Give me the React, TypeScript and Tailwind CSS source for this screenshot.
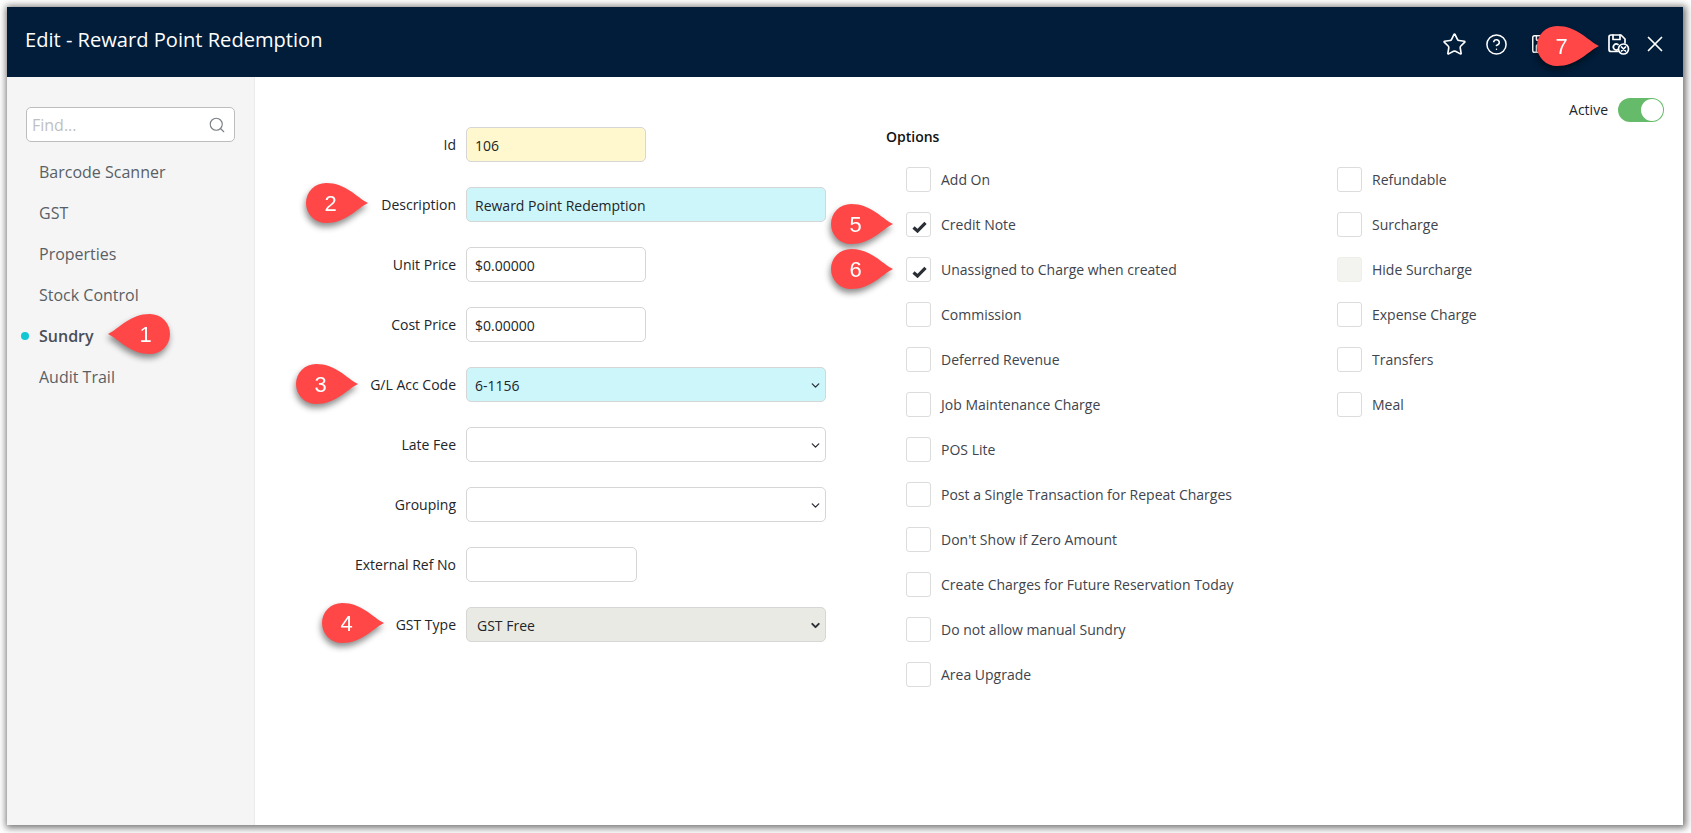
import React from 'react';
import { Star, CircleHelp, Save, X, Search, ChevronDown } from 'lucide-react';

const leftOptions = [
    { label: 'Add On' },
    { label: 'Credit Note', checked: true },
    { label: 'Unassigned to Charge when created', checked: true },
    { label: 'Commission' },
    { label: 'Deferred Revenue' },
    { label: 'Job Maintenance Charge' },
    { label: 'POS Lite' },
    { label: 'Post a Single Transaction for Repeat Charges' },
    { label: "Don't Show if Zero Amount" },
    { label: 'Create Charges for Future Reservation Today' },
    { label: 'Do not allow manual Sundry' },
    { label: 'Area Upgrade' },
];

const rightOptions = [
    { label: 'Refundable' },
    { label: 'Surcharge' },
    { label: 'Hide Surcharge', disabled: true },
    { label: 'Expense Charge' },
    { label: 'Transfers' },
    { label: 'Meal' },
];

const navItems = ['Barcode Scanner', 'GST', 'Properties', 'Stock Control', 'Sundry', 'Audit Trail'];

interface OptionProps {
    label: string;
    checked?: boolean;
    disabled?: boolean;
}

const Option: React.FC<OptionProps> = ({ label, checked, disabled }) => (
    <div className="flex h-[25px] items-center">
        <div
            className={`flex h-[25px] w-[25px] items-end justify-end rounded-[3px] border pr-[3px] pb-[3px] ${disabled ? 'border-[#eeeeea] bg-[#f3f3ef]' : 'border-[#dcdcdc] bg-white'}`}
        >
            {checked && (
                <svg width="15" height="12" viewBox="0 0 15 12">
                    <path d="M1.5 6.5 L5.5 10 L13.5 1.8" fill="none" stroke="#2a2e35" strokeWidth="3.2" />
                </svg>
            )}
        </div>
        <span className="ml-[10px] text-[14px] text-[#40444c]">{label}</span>
    </div>
);

const Row: React.FC<{ label: string; children: React.ReactNode }> = ({ label, children }) => (
    <div className="flex h-[35px] items-center">
        <span className="w-[201px] text-right text-[14px] text-[#212529]">{label}</span>
        <div className="ml-[10px]">{children}</div>
    </div>
);

const Field: React.FC<{ value?: string; className: string; chevron?: boolean; boldChevron?: boolean }> = ({ value, className, chevron, boldChevron }) => (
    <div className={`flex h-[35px] items-center justify-between rounded-[5px] border border-[#d6d6d6] pt-[1px] pr-[3px] text-[14px] text-[#212529] ${className}`}>
        <span>{value}</span>
        {chevron && <ChevronDown size={13} strokeWidth={boldChevron ? 3.6 : 2.4} className="text-[#2a2e35]" />}
    </div>
);

// numbered callout, tip points right unless flipped
const Pin: React.FC<{ n: number; className: string; flip?: boolean }> = ({ n, className, flip }) => (
    <div className={`absolute h-[40px] w-[62px] drop-shadow-[-1px_4px_3px_rgba(0,0,0,0.45)] ${className}`}>
        <svg viewBox="0 0 62 40" className={`h-full w-full ${flip ? '-scale-x-100' : ''}`}>
            <path d="M62 20 C50 14 40 0 20 0 A20 20 0 0 0 20 40 C40 40 50 26 62 20 Z" fill="#ff4747" />
        </svg>
        <span
            className={`absolute top-0 flex h-full w-[49px] items-center justify-center font-['Liberation_Sans',sans-serif] text-[22px] text-white ${flip ? 'right-0' : 'left-0'}`}
        >
            {n}
        </span>
    </div>
);

const SaveClose = () => (
    <svg width="24" height="24" viewBox="0 0 24 24" fill="none" stroke="white" strokeWidth="1.7" strokeLinecap="round" strokeLinejoin="round">
        <path d="M12 19.5H5a2 2 0 0 1-2-2V5a2 2 0 0 1 2-2h10l4 4v4" />
        <path d="M7 3v4.5h7V3" />
        <path d="M12 12.5a3 3 0 1 0 0 5" />
        <circle cx="17.5" cy="17" r="5" />
        <path d="M15.5 15l4 4M19.5 15l-4 4" />
    </svg>
);

export default function App() {
    return (
        <div className="relative h-[833px] w-[1691px] overflow-hidden bg-white font-['Open_Sans',sans-serif]">
            <div className="absolute top-[7px] left-[7px] flex h-[818px] w-[1676px] flex-col bg-white shadow-[1px_1px_7px_2px_rgba(0,0,0,0.55)]">
                {/* Header */}
                <div className="flex h-[70px] shrink-0 items-center justify-between bg-[#011d3a] pr-[15px] pl-[18px]">
                    <h1 className="pb-[3px] text-[20.1px] text-white">Edit - Reward Point Redemption</h1>
                    <div className="flex items-center pt-[4px] text-white">
                        <Star size={25} strokeWidth={1.6} />
                        <CircleHelp size={23} strokeWidth={1.6} className="ml-[18px]" />
                        <Save size={22} strokeWidth={1.6} className="ml-[22px]" />
                        <div className="ml-[54px]">
                            <SaveClose />
                        </div>
                        <X size={26} strokeWidth={1.6} className="ml-[12px]" />
                    </div>
                </div>

                <div className="flex min-h-0 flex-1">
                    {/* Sidebar */}
                    <div className="w-[248px] shrink-0 border-r border-[#ececec] bg-[#f5f5f5] pt-[30px]">
                        <div className="ml-[19px] flex h-[35px] w-[209px] items-center justify-between rounded-[5px] border border-[#bdbdbd] bg-white pr-[8px] pl-[5px]">
                            <span className="text-[16px] text-[#bfbfbf]">Find...</span>
                            <Search size={18} strokeWidth={1.5} className="text-[#7a7f85]" />
                        </div>
                        <div className="mt-[9.5px] flex flex-col">
                            {navItems.map(item => (
                                <div key={item} className="flex h-[41px] items-center pl-[14px]">
                                    {item === 'Sundry' ? <div className="h-[8px] w-[8px] rounded-full bg-[#12c7d4]" /> : <div className="w-[8px]" />}
                                    <span className={`ml-[10px] text-[16px] ${item === 'Sundry' ? 'font-semibold text-[#4a4e55]' : 'text-[#5a5f66]'}`}>{item}</span>
                                </div>
                            ))}
                        </div>
                    </div>

                    {/* Form */}
                    <div className="flex shrink-0 flex-col gap-[25px] pt-[50px]">
                        <Row label="Id"><Field value="106" className="w-[180px] bg-[#fff8cf] pl-[8px]" /></Row>
                        <Row label="Description"><Field value="Reward Point Redemption" className="w-[360px] bg-[#cdf6fb] pl-[8px]" /></Row>
                        <Row label="Unit Price"><Field value="$0.00000" className="w-[180px] bg-white pl-[8px]" /></Row>
                        <Row label="Cost Price"><Field value="$0.00000" className="w-[180px] bg-white pl-[8px]" /></Row>
                        <Row label="G/L Acc Code"><Field value="6-1156" chevron className="w-[360px] bg-[#cdf6fb] pl-[8px]" /></Row>
                        <Row label="Late Fee"><Field chevron className="w-[360px] bg-white pl-[8px]" /></Row>
                        <Row label="Grouping"><Field chevron className="w-[360px] bg-white pl-[8px]" /></Row>
                        <Row label="External Ref No"><Field className="w-[171px] bg-white pl-[8px]" /></Row>
                        <Row label="GST Type"><Field value="GST Free" chevron boldChevron className="w-[360px] bg-[#eaeae4] pl-[10px] text-[#3c4046]" /></Row>
                    </div>

                    {/* Options */}
                    <div className="flex-1 pt-[21px] pr-[19px] pl-[60px]">
                        <div className="flex h-[24px] items-center justify-end">
                            <span className="mr-[10px] pb-[2px] text-[14px] text-[#212529]">Active</span>
                            <div className="flex h-[24px] w-[46px] items-center justify-end rounded-full bg-[#66bb6a] pr-[1px]">
                                <div className="h-[22px] w-[22px] rounded-full bg-white" />
                            </div>
                        </div>
                        <div className="mt-[5px] h-[20px] text-[14px] leading-[20px] font-semibold text-[#111]">Options</div>
                        <div className="mt-[20px] ml-[20px] grid grid-cols-[431px_1fr]">
                            <div className="flex flex-col gap-[20px]">
                                {leftOptions.map(o => <Option key={o.label} {...o} />)}
                            </div>
                            <div className="flex flex-col gap-[20px]">
                                {rightOptions.map(o => <Option key={o.label} {...o} />)}
                            </div>
                        </div>
                    </div>
                </div>
            </div>

            <Pin n={1} flip className="top-[314px] left-[108px]" />
            <Pin n={2} className="top-[183px] left-[306px]" />
            <Pin n={3} className="top-[364px] left-[296px]" />
            <Pin n={4} className="top-[603px] left-[322px]" />
            <Pin n={5} className="top-[204px] left-[831px]" />
            <Pin n={6} className="top-[249px] left-[831px]" />
            <Pin n={7} className="top-[26px] left-[1537px]" />
        </div>
    );
}
